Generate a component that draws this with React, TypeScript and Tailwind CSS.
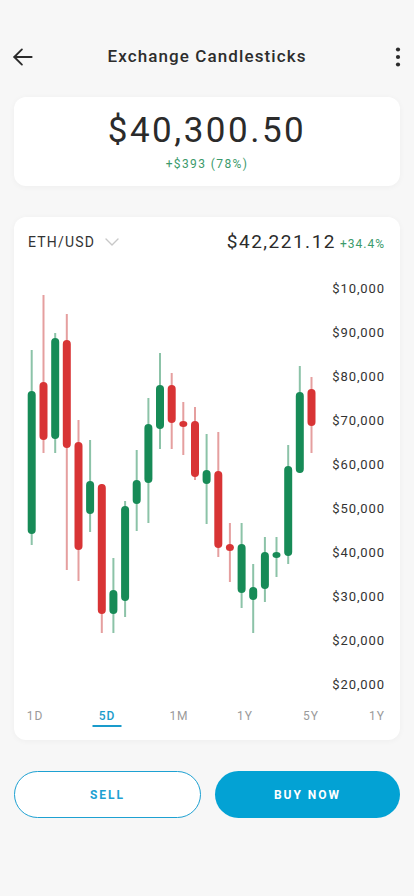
import React from "react";

type C = [number, number, number, number, number, "g" | "r"];

// [centerX(page), bodyTop, bodyBottom, wickTop, wickBottom, colour]
const candles: C[] = [
  [31.7, 391, 534, 350, 545, "g"],
  [43.5, 382, 440, 295, 453, "r"],
  [55.2, 338, 439, 333, 453, "g"],
  [66.8, 340, 448, 314, 570, "r"],
  [78.5, 442, 550, 420, 581, "r"],
  [90.1, 481, 514, 440, 532, "g"],
  [101.8, 484, 614, 484, 633, "r"],
  [113.4, 590, 614, 558, 633, "g"],
  [125.1, 506, 601, 501, 617, "g"],
  [136.7, 480, 504, 450, 531, "g"],
  [148.4, 424, 483, 398, 523, "g"],
  [160.0, 385, 429, 353, 449, "g"],
  [171.7, 385, 423, 373, 449, "r"],
  [183.3, 421, 427, 402, 455, "r"],
  [195.0, 421, 477, 407, 480, "r"],
  [206.6, 470, 484, 434, 524, "g"],
  [218.3, 471, 548, 432, 557, "r"],
  [229.9, 544, 551, 523, 582, "r"],
  [241.6, 544, 593, 523, 608, "g"],
  [253.2, 587, 600, 564, 633, "g"],
  [264.9, 552, 589, 537, 602, "g"],
  [276.5, 552, 558, 537, 577, "g"],
  [288.2, 466, 556, 445, 564, "g"],
  [299.8, 392, 473, 366, 473, "g"],
  [311.5, 389, 426, 377, 453, "r"],
];

const OX = 14;
const OY = 253;

const labels = [
  "$10,000",
  "$90,000",
  "$80,000",
  "$70,000",
  "$60,000",
  "$50,000",
  "$40,000",
  "$30,000",
  "$20,000",
  "$20,000",
];

const tabs = ["1D", "5D", "1M", "1Y", "5Y", "1Y"];
const tabMargins = ["ml-[6px]", "ml-[42px]", "ml-[42px]", "ml-[36px]", "ml-[36px]", "ml-[36px]"];

function Chart() {
  return (
    <svg width="310" height="454" viewBox="0 0 310 454" className="block shrink-0">
      {candles.map(([x, bt, bb, wt, wb, c], i) => {
        const cx = x - OX;
        const body = c === "g" ? "#178b57" : "#d83435";
        const wick = c === "g" ? "#8cc3a8" : "#e59f9f";
        return (
          <g key={i}>
            <rect x={cx - 1} y={wt - OY} width={2} height={wb - wt} fill={wick} />
            <rect
              x={cx - 4}
              y={bt - OY}
              width={8}
              height={Math.max(bb - bt, 6)}
              rx={4}
              fill={body}
            />
          </g>
        );
      })}
    </svg>
  );
}

export default function App() {
  return (
    <div
      className="min-h-[896px] w-[414px] bg-[#f7f7f7] text-[#2b2b2b]"
      style={{ fontFamily: "Roboto, 'Noto Sans', sans-serif" }}
    >
      {/* Header */}
      <div className="pt-[29px]">
        <div className="grid h-[56px] grid-cols-[48px_1fr_48px] items-center">
          <div className="flex items-center pl-[10px]">
            <svg width="26" height="26" viewBox="0 0 24 24" fill="none" stroke="#2b2b2b" strokeWidth="1.7" strokeLinecap="round" strokeLinejoin="round">
              <path d="M20 12H4" />
              <path d="M11 5l-7 7 7 7" />
            </svg>
          </div>
          <div className="text-center text-[17px] font-medium tracking-[1.1px] text-[#2d2d2d]">
            Exchange Candlesticks
          </div>
          <div className="flex items-center justify-end pr-[13px]">
            <svg width="6" height="20" viewBox="0 0 6 20">
              <circle cx="3" cy="2.5" r="2.1" fill="#2b2b2b" />
              <circle cx="3" cy="10" r="2.1" fill="#2b2b2b" />
              <circle cx="3" cy="17.5" r="2.1" fill="#2b2b2b" />
            </svg>
          </div>
        </div>
      </div>

      {/* Price card */}
      <div className="mx-[14px] mt-[12px] flex h-[89px] flex-col items-center rounded-[12px] bg-white shadow-[0_1px_6px_rgba(0,0,0,0.04)]">
        <div className="mt-[14px] text-[35px] leading-[40px] tracking-[2.5px] text-[#2b2b2b]">
          $40,300.50
        </div>
        <div className="mt-[6px] text-[12px] leading-[14px] tracking-[1.4px] text-[#3b9a6b]">
          +$393 (78%)
        </div>
      </div>

      {/* Chart card */}
      <div className="mx-[14px] mt-[31px] flex h-[523px] flex-col rounded-[12px] bg-white shadow-[0_1px_6px_rgba(0,0,0,0.04)]">
        <div className="mt-[14px] flex h-[22px] items-center justify-between pl-[14px] pr-[15px]">
          <div className="flex items-center">
            <span className="text-[14px] tracking-[1.2px] text-[#333]">ETH/USD</span>
            <svg className="ml-[9px]" width="16" height="10" viewBox="0 0 16 10" fill="none" stroke="#c8c8c8" strokeWidth="1.4" strokeLinecap="round" strokeLinejoin="round">
              <path d="M2 2l6 6 6-6" />
            </svg>
          </div>
          <div className="flex items-baseline">
            <span className="text-[19px] tracking-[1.5px] text-[#2b2b2b]">$42,221.12</span>
            <span className="ml-[4px] text-[12px] tracking-[1px] text-[#3b9a6b]">+34.4%</span>
          </div>
        </div>

        <div className="flex">
          <Chart />
          <div className="flex flex-1 flex-col items-end pr-[15px] pt-[14px]">
            {labels.map((l, i) => (
              <div key={i} className="flex h-[44px] items-center text-[13px] tracking-[0.9px] text-[#333]">
                {l}
              </div>
            ))}
          </div>
        </div>

        <div className="flex h-[18px] items-center">
          {tabs.map((t, i) => (
            <div
              key={i}
              className={
                tabMargins[i] +
                (i === 1
                  ? " relative w-[30px] text-center text-[12px] font-medium tracking-[1px] text-[#1a9bcb]"
                  : " relative w-[30px] text-center text-[12px] tracking-[1px] text-[#9a9a9a]")
              }
            >
              {t}
              {i === 1 && (
                <div className="absolute left-1/2 top-[18px] h-[2px] w-[29px] -translate-x-1/2 bg-[#1a9bcb]" />
              )}
            </div>
          ))}
        </div>
      </div>

      {/* Buttons */}
      <div className="mx-[14px] mt-[31px] flex gap-[14px]">
        <button className="flex h-[47px] flex-1 items-center justify-center rounded-full border border-[#1ea1d2] bg-white text-[12px] font-bold tracking-[2px] text-[#1ea1d2]">
          SELL
        </button>
        <button className="flex h-[47px] flex-1 items-center justify-center rounded-full bg-[#03a2d4] text-[12px] font-bold tracking-[2px] text-white">
          BUY NOW
        </button>
      </div>
    </div>
  );
}
